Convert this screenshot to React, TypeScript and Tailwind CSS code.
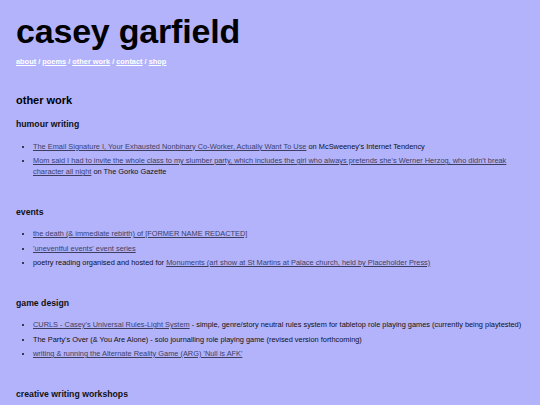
import React from 'react';

const link = 'text-[#3e3e62] underline underline-offset-1';

function Section({ title, children }: { title: string; children: React.ReactNode }) {
  return (
    <section className="mb-[29.5px]">
      <h3 className="text-[8.7px] font-bold leading-[11px] mb-[10.5px] text-[#111]">{title}</h3>
      <ul className="list-disc pl-[17px] space-y-[3.5px] text-[7.4px] leading-[11px] text-[#111]">{children}</ul>
    </section>
  );
}

export default function App() {
  return (
    <main
      className="min-h-screen bg-[#b3b3fc] px-4 pt-[12px] text-black"
      style={{ fontFamily: '"Liberation Sans", Arial, sans-serif' }}
    >
      <h1 className="text-[34px] font-bold leading-[38px] tracking-[-0.2px]">casey garfield</h1>
      <nav className="mt-[7px] text-[7.4px] font-bold leading-[10px] text-white">
        <a className="underline">about</a> / <a className="underline">poems</a> /{' '}
        <a className="underline">other work</a> / <a className="underline">contact</a> /{' '}
        <a className="underline">shop</a>
      </nav>

      <h2 className="mt-[26px] mb-[12px] text-[11px] font-bold leading-[14px]">other work</h2>

      <Section title="humour writing">
        <li>
          <a className={link}>The Email Signature I, Your Exhausted Nonbinary Co-Worker, Actually Want To Use</a> on
          McSweeney's Internet Tendency
        </li>
        <li>
          <a className={link}>
            Mom said I had to invite the whole class to my slumber party, which includes the girl who always pretends
            she's Werner Herzog, who didn't break character all night
          </a>{' '}
          on The Gorko Gazette
        </li>
      </Section>

      <Section title="events">
        <li>
          <a className={link}>the death (&amp; immediate rebirth) of [FORMER NAME REDACTED]</a>
        </li>
        <li>
          <a className={link}>'uneventful events' event series</a>
        </li>
        <li>
          poetry reading organised and hosted for{' '}
          <a className={link}>Monuments (art show at St Martins at Palace church, held by Placeholder Press)</a>
        </li>
      </Section>

      <Section title="game design">
        <li>
          <a className={link}>CURLS - Casey's Universal Rules-Light System</a> - simple, genre/story neutral rules system
          for tabletop role playing games (currently being playtested)
        </li>
        <li>The Party's Over (&amp; You Are Alone) - solo journalling role playing game (revised version forthcoming)</li>
        <li>
          <a className={link}>writing &amp; running the Alternate Reality Game (ARG) 'Null is AFK'</a>
        </li>
      </Section>

      <Section title="creative writing workshops">
        <li>placeholder</li>
      </Section>
    </main>
  );
}
